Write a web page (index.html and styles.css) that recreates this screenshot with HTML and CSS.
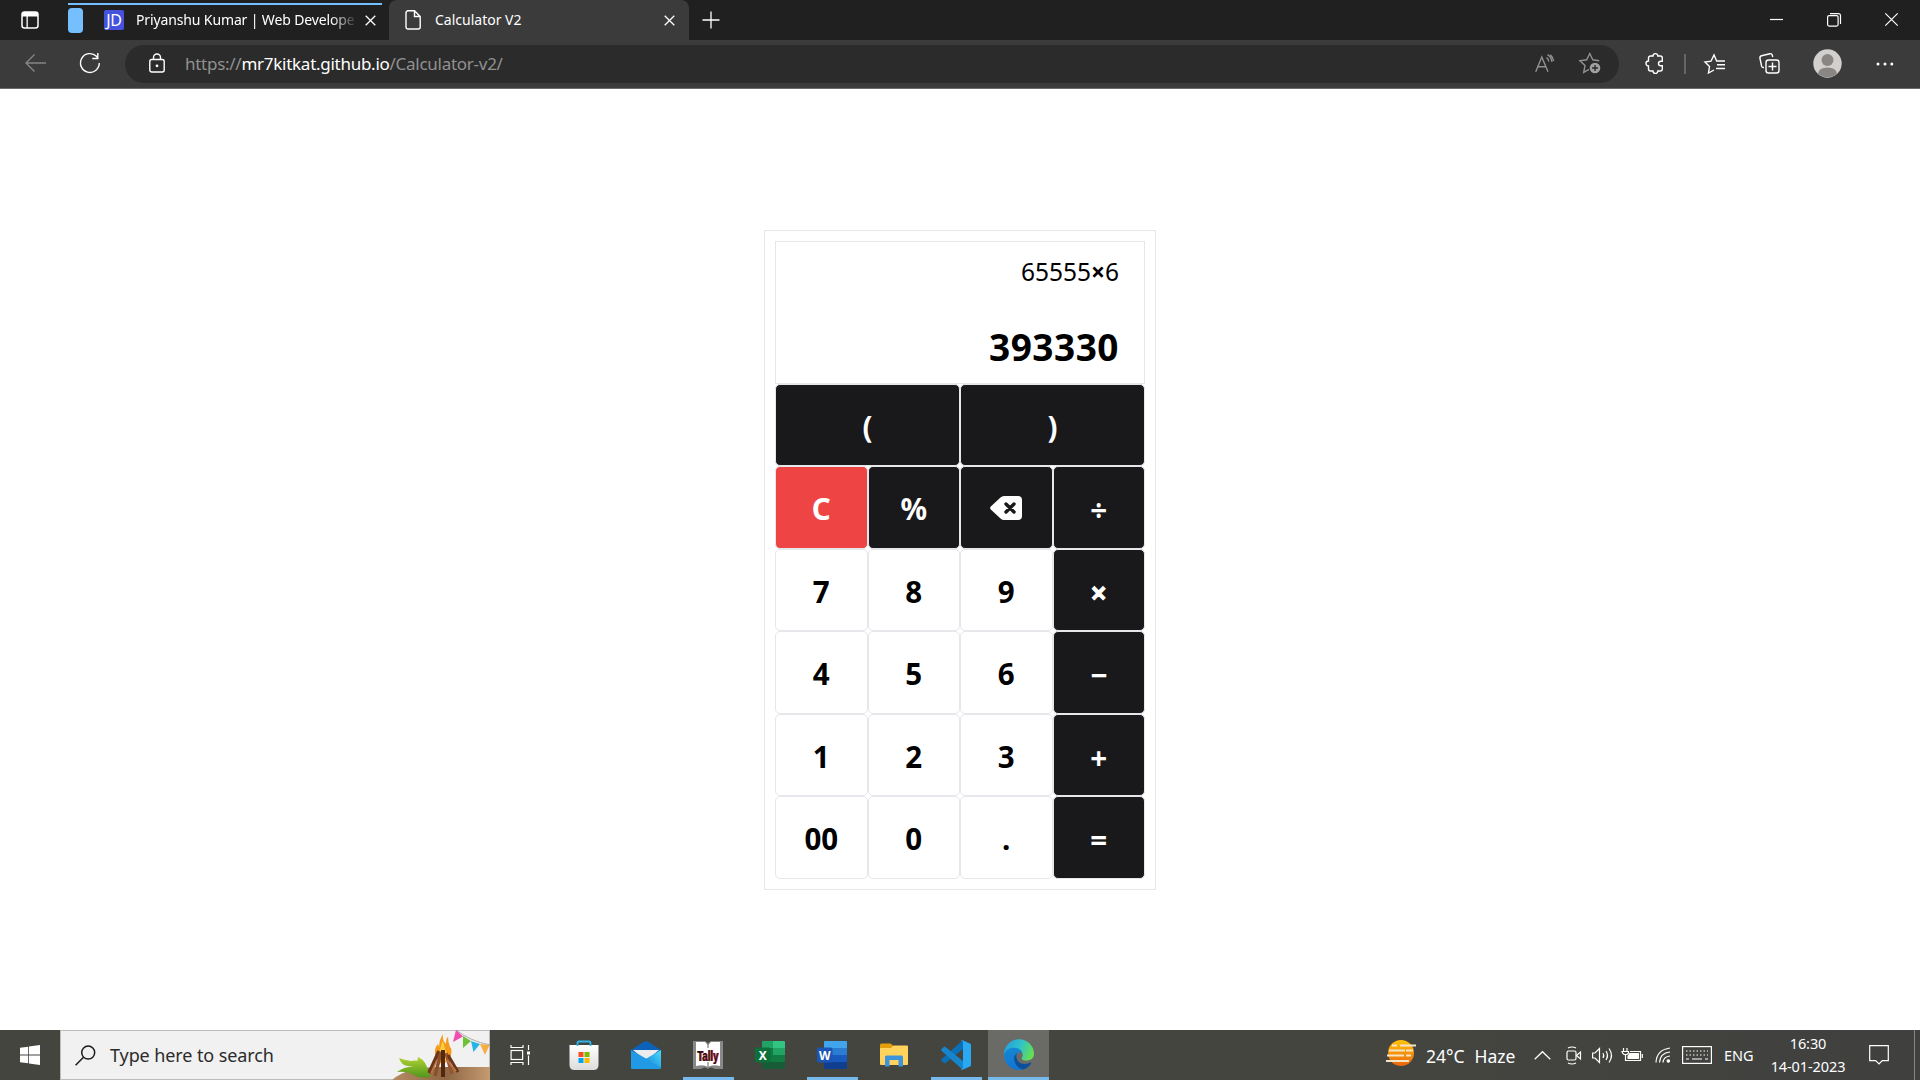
FILE: index.html
```html
<!DOCTYPE html>
<html lang="en">
<head>
<meta charset="utf-8">
<title>Calculator V2</title>
<link rel="stylesheet" href="styles.css">
</head>
<body>
<header class="tabstrip">
  <svg class="tab-actions" width="18" height="18" viewBox="0 0 18 18"><rect x="1" y="1" width="16" height="16" rx="2.500" fill="none" stroke="#fff" stroke-width="1.500"/><path d="M1 3a2 2 0 0 1 2-2h12a2 2 0 0 1 2 2v2.500H1zM5.500 5h1.300v12H5.500z" fill="#fff"/></svg>
  <div class="group">
    <span class="group-pill"></span>
    <span class="favicon">JD</span>
    <span class="tab-title fade">Priyanshu Kumar | Web Develope</span>
    <svg class="close" width="11" height="11" viewBox="0 0 11 11"><path d="M.7.700l9.600 9.600M10.300.700L.7 10.300"/></svg>
  </div>
  <div class="tab-active">
    <svg width="16" height="20" viewBox="0 0 16 20"><path d="M3 .8h6.500L15.200 6.500V17a2 2 0 0 1-2 2H3a2 2 0 0 1-2-2V2.800a2 2 0 0 1 2-2zM9.500 1v5.500H15" fill="none" stroke="#fff" stroke-width="1.400"/></svg>
    <span class="tab-title">Calculator V2</span>
    <svg class="close" width="11" height="11" viewBox="0 0 11 11"><path d="M.7.700l9.600 9.600M10.300.700L.7 10.300"/></svg>
  </div>
  <svg class="newtab" width="18" height="18" viewBox="0 0 18 18"><path d="M9 .5v17M.5 9h17"/></svg>
  <div class="winctl">
    <svg width="13" height="13" viewBox="0 0 13 13"><path d="M0 6.500h13"/></svg>
    <svg width="14" height="14" viewBox="0 0 14 14"><rect x=".6" y="2.600" width="10.500" height="10.500" rx="1.500"/><path d="M3 .6h8.500a2 2 0 0 1 2 2V11"/></svg>
    <svg width="13" height="13" viewBox="0 0 13 13"><path d="M.3.300l12.400 12.400M12.700.300L.3 12.700"/></svg>
  </div>
</header>
<nav class="toolbar">
  <svg class="back" width="21" height="18" viewBox="0 0 21 18"><path d="M9.500.500L1 9l8.500 8.500M1 9h20"/></svg>
  <svg class="reload" width="22" height="22" viewBox="0 0 22 22"><path d="M20.300 11a9.400 9.400 0 1 1-2.800-6.700l1.300 1.700M18.800 1v5.500h-5.500"/></svg>
  <div class="address">
    <svg width="16" height="20" viewBox="0 0 16 20"><rect x=".8" y="6.500" width="14.400" height="12.500" rx="2"/><path d="M4.500 6.500V4.500a3.500 3.500 0 0 1 7 0v2"/><circle cx="8" cy="12.800" r=".7"/></svg>
    <span class="url">https://<b>mr7kitkat.github.io</b>/Calculator-v2/</span>
    <svg class="aloud" width="20" height="19" viewBox="0 0 20 19"><path d="M.7 17.800L6.800 3l6.200 14.800M2.700 12.800H11M11.500 3.500q2 1.300 2.300 4M12.500.700q4 2.500 4.500 7.300M15.300.700q3 2.800 3.400 6.300"/></svg>
    <svg class="staradd" width="22" height="22" viewBox="0 0 22 22"><path d="M10 17.300l-5.300 3 1.300-6.700L.9 8.800l6.800-1L10.800 1.500l3 6.300 6.400 1"/><circle cx="16" cy="16" r="5.300" class="disc"/><path d="M16 13v6M13 16h6" class="plus"/></svg>
  </div>
  <div class="tools">
    <svg width="20" height="21" viewBox="0 0 20 21"><path d="M5.500 3H8a2.400 2.400 0 0 1 4.800 0h2.500a2 2 0 0 1 2 2v3.200h-1.500a2.200 2.200 0 0 0 0 4.600h1.500V16a2 2 0 0 1-2 2h-2.500a2.400 2.400 0 0 1-4.800 0H5.500a2 2 0 0 1-2-2v-3a2.500 2.500 0 0 1 0-5V5a2 2 0 0 1 2-2z"/></svg>
    <i class="sep"></i>
    <svg class="favs" width="22" height="20" viewBox="0 0 22 20"><path d="M10 16l-5.500 3 1-6.500L1 8l6-.8L10 1l2.700 6h8.300M13 10.800h8M12 14.500h9"/></svg>
    <svg class="coll" width="21" height="21" viewBox="0 0 21 21"><rect x="7" y="7" width="13" height="13" rx="2.500"/><path d="M13.500 9.500v8M9.500 13.500h8M5 14.500c-1.400.2-2-.3-2.300-1L1 5.500C.7 4 1.200 3 2.500 2.700l8.500-2c1.300-.2 2 .4 2.300 1.500l.4 1.800"/></svg>
    <svg class="avatar" width="29" height="29" viewBox="0 0 29 29"><circle cx="14.500" cy="14.500" r="14.200" fill="#d2d0ce"/><circle cx="14.500" cy="11" r="6" fill="#8a8684"/><path d="M5 24.500Q6 18.500 14.500 18.500T24 24.500A14 14 0 0 1 5 24.500" fill="#8a8684"/></svg>
    <svg class="dots" width="18" height="4" viewBox="0 0 18 4"><circle cx="2" cy="2" r="1.500"/><circle cx="9" cy="2" r="1.500"/><circle cx="15.800" cy="2" r="1.500"/></svg>
  </div>
</nav>
<main>
  <section class="calculator">
    <div class="display"><div class="expression">65555<b>×</b>6</div><div class="result">393330</div></div>
    <div class="keys">
      <button class="key dark wide">(</button><button class="key dark wide">)</button>
      <button class="key red">C</button><button class="key dark">%</button>
      <button class="key dark"><svg width="32" height="24" viewBox="0 0 32 24"><path d="M10.500 1.500Q12 0 14 0h14a4 4 0 0 1 4 4v16a4 4 0 0 1-4 4H14q-2 0-3.500-1.500L.8 13.500Q-.5 12 .8 10.500z" fill="#fff"/><path d="M16 8l8 8M24 8l-8 8" stroke="#19191b" stroke-width="3.400" stroke-linecap="round"/></svg></button>
      <button class="key dark op">÷</button>
      <button class="key">7</button><button class="key">8</button><button class="key">9</button><button class="key dark op heavy">×</button>
      <button class="key">4</button><button class="key">5</button><button class="key">6</button><button class="key dark op">−</button>
      <button class="key">1</button><button class="key">2</button><button class="key">3</button><button class="key dark op">+</button>
      <button class="key">00</button><button class="key">0</button><button class="key">.</button><button class="key dark op">=</button>
    </div>
  </section>
</main>
<footer class="taskbar">
  <div class="start"><svg width="20" height="20" viewBox="0 0 20 20"><path fill="#fff" d="M0 2.800L8.200 1.700V9.500H0zM9 1.500L20 0V9.500H9zM0 10.400H8.200V18.300L0 17.200zM9 10.400H20V20L9 18.500z"/></svg></div>
  <div class="search">
    <svg width="21" height="21" viewBox="0 0 21 21"><circle cx="13.200" cy="7.600" r="6.500"/><path d="M8.500 12.300L.6 20.200"/></svg>
    <span>Type here to search</span>
    <svg class="campfire" width="98" height="50" viewBox="0 0 98 50">
      <defs><linearGradient id="sand" x1="0" x2="1"><stop stop-color="#b58b62"/><stop offset=".55" stop-color="#8d6743"/><stop offset="1" stop-color="#c49a70"/></linearGradient><linearGradient id="leaf" x1="0" y1="0" x2="0" y2="1"><stop stop-color="#b3d334"/><stop offset="1" stop-color="#4f961c"/></linearGradient></defs>
      <path d="M0 50Q14 37 50 37H98V50z" fill="url(#sand)"/>
      <path d="M39 47Q30 38 24 37Q13 36 5 42Q14 41 20 44Q27 49 39 47zM38 46Q32 28 19 31Q12 30 7 28Q9 35 16 36Q27 36 38 46zM37 44Q35 31 26 27Q23 38 37 44z" fill="url(#leaf)"/>
      <path d="M44 28Q41 19 46 14Q47 16 47 18Q47 10 51 4Q50 10 54 14Q54 8 56 7Q56 12 58 17Q61 19 58 29L50 35z" fill="#f59a1c"/><path d="M47 30Q45 22 48 20Q50 12 51 11Q53 19 54 22Q57 24 54 31z" fill="#ffcf36"/>
      <g fill="none"><path d="M47 21L37 43" stroke="#6d3517" stroke-width="3.500"/><path d="M49 22L43 46" stroke="#8d4e28" stroke-width="3.500"/><path d="M54 23L60 44" stroke="#955630" stroke-width="3.500"/><path d="M56 25L66 42" stroke="#6d3517" stroke-width="3"/><path d="M51 20V47" stroke="#56270f" stroke-width="4"/><path d="M45 30L39 43M55 30L64 41" stroke="#b87849"/>
      <path d="M64 0Q78 11 98 15" stroke="#8b8b8b" stroke-width=".7"/></g>
      <path d="M64 0L71 6.500L61 12z" fill="#f04bae"/><path d="M71 6L79 11L71 18z" fill="#6fc138"/><path d="M79 11L88 14L81.500 22z" fill="#27b3e5"/><path d="M88 14L97.500 15L93 25z" fill="#f8ad43"/>
    </svg>
  </div>
  <div class="apps">
    <div class="app"><svg width="20" height="20" viewBox="0 0 20 20" stroke="#fff" stroke-width="1.200"><rect x="1.100" y="5.500" width="11.500" height="9"/><path d="M1 0v2.500H13V0M1 20v-2.500H13V20M18.500 0v5M18.500 10.500V20"/><path d="M17 6.500h3v3h-3z" fill="#fff" stroke="none"/></svg></div>
    <div class="app"><svg width="30" height="30" viewBox="0 0 30 30"><defs><linearGradient id="bag" x1="0" y1="0" x2="0" y2="1"><stop stop-color="#fff"/><stop offset="1" stop-color="#dcdcdc"/></linearGradient></defs><path d="M.5 5h29v20q0 5-5 5h-19q-5 0-5-5z" fill="url(#bag)"/><path d="M8.500 6V3q0-1.500 1.500-1.500h10q1.500 0 1.500 1.500v3" fill="none" stroke="#2fb5ea" stroke-width="1.800"/><path d="M9.500 12h5v5h-5z" fill="#f25022"/><path d="M15.500 12h5v5h-5z" fill="#7fba00"/><path d="M9.500 18h5v5h-5z" fill="#00a4ef"/><path d="M15.500 18h5v5h-5z" fill="#ffb900"/></svg></div>
    <div class="app"><svg width="30" height="28" viewBox="0 0 30 28"><defs><linearGradient id="env" x1="0" y1="1" x2="1" y2="0"><stop stop-color="#1683d8"/><stop offset=".6" stop-color="#32b8f0"/><stop offset="1" stop-color="#50dcf8"/></linearGradient></defs><path d="M0 9L12.500 1q2.500-1.500 5 0L30 9v3H0z" fill="#0c62b8"/><path d="M2 9h26L15 20z" fill="#ececf0"/><path d="M0 9l30 17v1q0 1-1 1H1q-1 0-1-1z" fill="#209ae4"/><path d="M30 9v17.500L14.500 18z" fill="url(#env)"/></svg></div>
    <div class="app running"><svg width="30" height="30" viewBox="0 0 30 30"><path d="M0 1h12l3 2 3-2h12v28h-8q-5-3-7 0-3-3-7 0H0z" fill="#888"/><path d="M3 2h9l3 3 3-3h9v24q-8-2-12 1-4-3-12-1z" fill="#fff"/><path d="M15 3v5M15 22v5" stroke="#666"/><text x="5" y="21" class="tally" fill="#e3122b" textLength="21" lengthAdjust="spacingAndGlyphs">Tally</text><text x="4" y="20.500" class="tally" fill="#161616" textLength="21" lengthAdjust="spacingAndGlyphs">Tally</text></svg></div>
    <div class="app"><svg width="30" height="28" viewBox="0 0 30 28"><path d="M7 1q0-1 1-1h11v7H7z" fill="#21a366"/><path d="M18 0h11q1 0 1 1v6H18z" fill="#33c481"/><path d="M7 7h11v14H7z" fill="#107c41"/><path d="M18 7h12v7H18z" fill="#21a366"/><path d="M18 14h12v7H18z" fill="#107c41"/><path d="M7 21h23v6q0 1-1 1H8q-1 0-1-1z" fill="#185c37"/><rect y="6.500" width="15.500" height="15" rx="1.500" fill="#0d703a"/><text x="7.700" y="18.500" class="letter">X</text></svg></div>
    <div class="app running"><svg width="30" height="28" viewBox="0 0 30 28"><path d="M7 1q0-1 1-1h21q1 0 1 1v6H7z" fill="#41a5ee"/><path d="M7 7h23v7H7z" fill="#2b7cd3"/><path d="M7 14h23v7H7z" fill="#185abd"/><path d="M7 21h23v6q0 1-1 1H8q-1 0-1-1z" fill="#103f91"/><rect y="6.500" width="15.500" height="15" rx="1.500" fill="#1c55b5"/><text x="7.700" y="18.500" class="letter">W</text></svg></div>
    <div class="app"><svg width="28" height="24" viewBox="0 0 28 24"><path d="M0 2Q0 .5 1.500.5h8.500q1 0 1.800 1L13.500 3v4H0z" fill="#e59e0b"/><path d="M0 5h11l2.500-2.500H27q1 0 1 1V21q0 1-1 1H1q-1 0-1-1z" fill="#ffd35c"/><path d="M5 23.500V14q0-1.500 1.500-1.500h15Q23 12.500 23 14v9.500h-4.500V17h-9v6.500z" fill="#3d94dc"/></svg></div>
    <div class="app running"><svg width="30" height="30" viewBox="0 0 30 30"><path d="M22 0v9L4.500 23q-1 .8-1.800 0L.5 21q-1-1 0-1.800z" fill="#0b70b8"/><path d="M22 30v-9L4.500 7q-1-.8-1.800 0L.5 9q-1 1 0 1.800z" fill="#1685cb"/><path d="M21.500 0.300L29 3.500q1 .5 1 1.500v20q0 1-1 1.500l-7.500 3.300q-1 .2-1.500-.5 2 0 2-2V2.500q0-2-2-2 .5-.7 1.500-.2z" fill="#29a9f2"/></svg></div>
    <div class="app running current"><svg width="30" height="30" viewBox="0 0 30 30"><defs><linearGradient id="wave" x1="0" y1=".3" x2="1" y2=".6"><stop stop-color="#269fe0"/><stop offset=".5" stop-color="#2fc2c8"/><stop offset="1" stop-color="#69e14c"/></linearGradient><linearGradient id="sea" x1="0" y1="0" x2="0" y2="1"><stop stop-color="#1487d4"/><stop offset="1" stop-color="#1275d0"/></linearGradient></defs><path d="M0 15A15 15 0 0 1 30 13.500c0 5-3.500 7-7.500 7-4 0-5.500-1.500-4.500-3q2-3-1-6Q9 6 0 15z" fill="url(#wave)"/><path d="M0 15.500C1 8 9 6.500 14 8.500q3.500 1.500 4.500 4Q12 11 11.500 17q0 8 10 8.500l4.500-.5Q21 30 15 30A15 15 0 0 1 0 15.500z" fill="url(#sea)"/><path d="M13 13q-5 4-1.500 10.500 2.500 5 7.500 6 5-1.300 8.200-6 .4-1.300-.7-1Q18 26.500 13.500 20.500q-2-3.500-.5-7.500z" fill="#0c509c"/></svg></div>
  </div>
  <div class="tray">
    <div class="weather">
      <svg width="30" height="27" viewBox="0 0 30 27"><defs><linearGradient id="sun" x1="0" y1="0" x2="0" y2="1"><stop stop-color="#ffc30a"/><stop offset="1" stop-color="#ea650b"/></linearGradient></defs><circle cx="15" cy="13" r="13" fill="url(#sun)"/><path d="M6 5.500h5M14 5.500h16M3 10.500h16M20 10.500h7M1 15.500h17M20 15.500h5M0 21h23" stroke="#f4e5c8" stroke-width="2"/></svg>
      <span>24°C</span><span>Haze</span>
    </div>
    <svg class="chev" width="17" height="9" viewBox="0 0 17 9"><path d="M.7 8.300L8.500.7l7.800 7.600"/></svg>
    <svg class="meet" width="16" height="19" viewBox="0 0 16 19"><rect x="1" y="5" width="9" height="9" rx="1.500"/><path d="M10.500 9.500l4-3.500v7zM2 2Q6 0 10 2M2 17Q6 19 10 17"/></svg>
    <svg class="sound" width="21" height="17" viewBox="0 0 21 17"><path d="M.6 6H3l4.500-4.500v14L3 11H.6zM11 6q1.500 2.500 0 5M14 4q3 4.500 0 9M17 1.500q5 7 0 14"/></svg>
    <svg class="batt" width="21" height="15" viewBox="0 0 21 15"><path d="M3.500 7v5.500H18.500V3.500H8M20.300 6v4M1.500 0v3M5 0v3M0 3.500h6.500v1.500L5 6.500H2L.5 5z"/><path d="M5.500 8l2-3h9.500v6H5.500z" fill="#fff" stroke="none"/></svg>
    <svg class="wifi" width="16" height="17" viewBox="0 0 16 17"><path d="M1 15.500Q1.500 3 15 1M4.500 15.500Q5 6 15 5M8 15.500Q8.500 9.500 15 9"/><circle cx="13.300" cy="14" r="1.200" fill="#fff"/></svg>
    <svg class="kbd" width="30" height="18" viewBox="0 0 30 18"><rect x=".6" y=".6" width="28.800" height="16.800"/><path d="M4 5h22M4 9h22" stroke-dasharray="1.500 2"/><path d="M4 13h3M10 13h10M23 13h3"/></svg>
    <span class="lang">ENG</span>
    <div class="clock"><span>16:30</span><span>14-01-2023</span></div>
    <svg class="notif" width="20" height="20" viewBox="0 0 20 20"><path d="M.7.700h18.600v15h-6L10 19l-3.300-3.300h-6z"/></svg>
    <i class="desk"></i>
  </div>
</footer>
</body>
</html>
```
FILE: styles.css
```css
*{box-sizing:border-box}
body{margin:0;height:1080px;display:flex;flex-direction:column;font-family:"Noto Sans",sans-serif;background:#fff;overflow:hidden}
svg{display:block;flex:none;fill:none;overflow:visible}
span{white-space:nowrap}

.tabstrip{height:40px;background:#202020;display:flex;align-items:center;color:#fff}
.tab-actions{margin-left:21px}
.group{width:321px;height:40px;margin-left:29px;display:flex;align-items:center;background:linear-gradient(#76bfff,#76bfff) 0 3px/314px 2px no-repeat}
.group-pill{width:15px;height:25px;border-radius:4px;background:#76bfff;margin-top:1px}
.favicon{width:20px;height:20px;margin-left:21px;border-radius:2px;background:#4552dd;color:#fff;font-size:16px;line-height:20px;text-align:center;letter-spacing:-.3px}
.tab-title{font-size:14px;padding-bottom:1px}
.fade{margin-left:12px;width:219px;overflow:hidden;letter-spacing:-.13px;-webkit-mask-image:linear-gradient(90deg,#000 195px,transparent 222px)}
.close{stroke:#fff;stroke-width:1.3}
.group .close{margin-left:10px}
.tab-active{width:300px;height:40px;background:#3b3b3b;border-radius:8px 8px 0 0;display:flex;align-items:center;padding:0 14px 0 16px}
.tab-active .tab-title{margin-left:14px;flex:1}
.newtab{margin-left:13px;stroke:#fff;stroke-width:1.3}
.winctl{display:flex;align-items:center;margin-left:auto;margin-right:22px;padding-bottom:1px;gap:44px;stroke:#fff;stroke-width:1.2}

.toolbar{height:49px;background:#3b3b3b;border-bottom:1px solid #6b6b6b;display:flex;align-items:center;stroke-width:1.4}
.back{margin-left:25px;stroke:#858585}
.reload{margin-left:33px;stroke:#fff}
.back,.reload{position:relative;top:-1px}
.address{width:1494px;height:38px;margin-left:24px;border-radius:19px;background:#2b2b2b;display:flex;align-items:center;padding:0 18px 2px 24px;stroke:#fff}
.url{font-size:17px;letter-spacing:-.27px;color:#919191;margin-left:20px;flex:1}
.url b{font-weight:400;color:#fff}
.aloud,.staradd{stroke:#929292}
.staradd{margin-left:24px}
.disc{fill:#a0a0a0;stroke:none}
.plus{stroke:#2b2b2b}
.tools{display:flex;align-items:center;stroke:#fff;margin-left:26px;padding-bottom:1px}
.sep{width:2px;height:20px;background:#666;margin-left:19px}
.favs{margin-left:18px}
.coll{margin-left:33px}
.avatar{margin-left:33px;stroke:none}
.dots{margin-left:34px;fill:#fff;stroke:none}

main{flex:1;display:flex;align-items:center;justify-content:center;padding-top:1px}
.calculator{width:392px;height:660px;border:1px solid #e5e7eb;padding:10px}
.display{height:143px;border:1px solid #e5e7eb;padding:12px 25px 0;text-align:right}
.expression{font-size:24.5px;line-height:36px}
.result{font-size:37px;line-height:54px;font-weight:700;margin-top:30px;letter-spacing:.5px}
.keys{display:grid;grid-template-columns:repeat(4,92.5px);grid-template-rows:repeat(3,82px 83px)}
.key{border:1px solid #e5e7eb;border-radius:5px;background:#fff;color:#000;font:700 29.5px "Noto Sans",sans-serif;padding:2px 0 0;display:flex;align-items:center;justify-content:center}
.key svg{margin-top:-2px}
.op{padding-top:4px}
.heavy{-webkit-text-stroke:.8px #fff}
.wide{grid-column:span 2}
.dark{background:#19191b;color:#fff}
.red{background:#ef4444;color:#fff}

.taskbar{height:50px;background:#44453f;display:flex;color:#fff}
.start{width:60px;display:flex;align-items:center;justify-content:center}
.search{width:430px;border:1px solid #bcbcbc;background:#f1f1f1;display:flex;align-items:center;padding-left:14px;color:#2b2b2b;font-size:18px;letter-spacing:-.1px;position:relative;stroke-width:1.5}
.search>svg:first-child{stroke:#1b1b1b}
.search span{margin-left:14px}
.campfire{position:absolute;right:-1px;top:-1px}
.apps{display:flex}
.app{width:62px;display:flex;align-items:center;justify-content:center;position:relative}
.app:first-child{width:63px;padding-right:3px}
.running::after{content:"";position:absolute;left:6px;right:5px;bottom:0;height:3px;background:#76b9ed}
.current{background:#6a6b67;width:61px;margin-left:1px}
.current::after{left:0;right:0}
.letter{font:700 12px "Noto Sans",sans-serif;fill:#fff;text-anchor:middle}
.tally{font:700 15px "Liberation Sans",sans-serif}
.tray{margin-left:auto;display:flex;align-items:center;stroke:#fff;stroke-width:1.2;background:linear-gradient(90deg,#44453f,#40413f)}
.tray text,.weather svg{stroke:none}
.weather{display:flex;align-items:center;width:147px;font-size:17.5px}
.weather svg{margin-top:-4px}
.weather span{margin-top:2px;margin-left:10px}
.chev{margin-left:1px}
.meet{margin-left:15px}
.sound{margin-left:10px}
.batt{margin-left:9px}
.wifi{margin-left:12px}
.kbd{margin-left:11px}
.lang{font-size:14.5px;width:46px;padding-left:12px}
.clock{width:100px;display:flex;flex-direction:column;text-align:center;font-size:14.5px;line-height:23px;letter-spacing:-.1px}
.notif{margin-left:11px}
.desk{width:1px;height:50px;background:#85867f;margin-left:25px;margin-right:5px}
```
